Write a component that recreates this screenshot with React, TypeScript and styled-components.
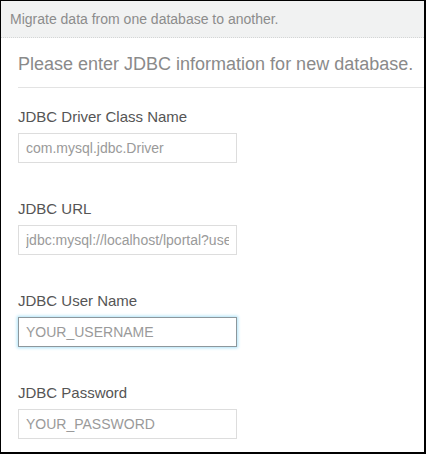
import React from 'react';
import styled, { createGlobalStyle } from 'styled-components';

const GlobalStyle = createGlobalStyle`
    html, body {
        margin: 0;
        padding: 0;
        background: #ffffff;
    }
    * {
        box-sizing: border-box;
    }
`;

interface StyledInputProps {
    $focused?: boolean;
}

const StyledFrame = styled.div`
    width: 426px;
    height: 454px;
    border-top: 1px solid #000000;
    border-left: 1px solid #000000;
    border-right: 2px solid #000000;
    border-bottom: 2px solid #000000;
    background: #ffffff;
    font-family: 'Liberation Sans', Arial, sans-serif;
    overflow: hidden;
`;

const StyledHeader = styled.div`
    height: 37px;
    padding-left: 9px;
    background: #f1f2f2;
    border-bottom: 1px dotted #d4d6d6;
    color: #8c8c8c;
    font-size: 14px;
    line-height: 36px;
    white-space: nowrap;
`;

const StyledBody = styled.div`
    padding: 14px 0 0 17px;
`;

const StyledTitle = styled.div`
    color: #8a8a8a;
    font-size: 18px;
    line-height: 24px;
    padding-bottom: 11px;
    border-bottom: 1px solid #e3e3e3;
    margin-bottom: 19px;
    white-space: nowrap;
`;

const StyledField = styled.div`
    display: flex;
    flex-direction: column;

    &:not(:last-child) {
        margin-bottom: 36px;
    }
`;

const StyledLabel = styled.label`
    color: #555555;
    font-size: 15px;
    line-height: 20px;
    margin-bottom: 6px;
`;

const StyledInput = styled.input<StyledInputProps>`
    width: 219px;
    height: 30px;
    padding: 0 7px;
    border: 1px solid ${({ $focused }) => ($focused ? '#8d979c' : '#dddddd')};
    box-shadow: ${({ $focused }) => ($focused ? '0 0 3px 1px #aee3f7' : 'none')};
    border-radius: 0;
    outline: none;
    background: #ffffff;
    font-family: 'Liberation Sans', Arial, sans-serif;
    font-size: 14px;
    color: #999999;

    &::placeholder {
        color: #9a9a9a;
        opacity: 1;
    }
`;

const fields = [
    { label: 'JDBC Driver Class Name', placeholder: 'com.mysql.jdbc.Driver' },
    { label: 'JDBC URL', placeholder: 'jdbc:mysql://localhost/lportal?useUnicode=true' },
    { label: 'JDBC User Name', placeholder: 'YOUR_USERNAME', focused: true },
    { label: 'JDBC Password', placeholder: 'YOUR_PASSWORD' }
];

export default function App() {
    return (
        <>
            <GlobalStyle />
            <StyledFrame>
                <StyledHeader>Migrate data from one database to another.</StyledHeader>
                <StyledBody>
                    <StyledTitle>Please enter JDBC information for new database.</StyledTitle>
                    {fields.map((field) => (
                        <StyledField key={field.label}>
                            <StyledLabel>{field.label}</StyledLabel>
                            <StyledInput
                                type="text"
                                placeholder={field.placeholder}
                                $focused={field.focused}
                                readOnly
                            />
                        </StyledField>
                    ))}
                </StyledBody>
            </StyledFrame>
        </>
    );
}
